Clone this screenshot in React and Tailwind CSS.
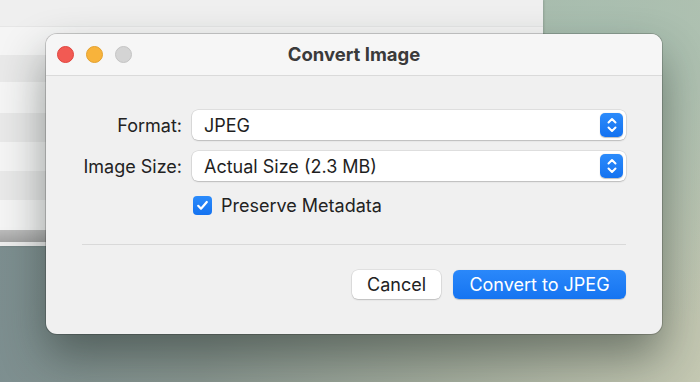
import React from 'react'

const rows = [28, 27, 31, 29, 29, 29, 27]

function Stepper() {
  return (
    <div className="w-[23px] h-[24px] rounded-[5px] bg-gradient-to-b from-[#2b8bfb] to-[#1472f0] flex items-center justify-center shadow-[0_0.5px_1px_rgba(0,0,0,0.25)]">
      <svg width="14" height="18" viewBox="0 0 14 18" fill="none" stroke="white" strokeWidth="2" strokeLinecap="round" strokeLinejoin="round">
        <path d="M3.5 6.5L7 3l3.5 3.5" />
        <path d="M3.5 11.5L7 15l3.5-3.5" />
      </svg>
    </div>
  )
}

function PopUp({ value }) {
  return (
    <div className="flex-1 h-[30px] rounded-[6px] bg-white flex items-center justify-between pl-[12px] pr-[3px] shadow-[0_0_0_0.5px_rgba(0,0,0,0.14),0_1px_1.5px_rgba(0,0,0,0.16)]">
      <span className="text-[18px] text-[#1f1f1f]">{value}</span>
      <Stepper />
    </div>
  )
}

export default function App() {
  return (
    <div
      className="relative w-[700px] h-[382px] overflow-hidden bg-[linear-gradient(100deg,#7a8d90_0%,#88958f_35%,#a2ab9c_65%,#c4c8b2_100%)]"
      style={{ fontFamily: 'Inter, "Noto Sans", sans-serif' }}
    >
      {/* green tint top right of desktop */}
      <div className="absolute inset-0 bg-[radial-gradient(ellipse_at_85%_10%,rgba(168,192,178,0.9)_0%,rgba(168,192,178,0)_60%)]" />

      {/* window behind the sheet */}
      <div className="absolute left-0 top-0 w-[543px] h-[246px] bg-[#f2f2f2] flex flex-col shadow-[1px_0_2px_rgba(0,0,0,0.15)]">
        <div className="h-[27px] bg-[#efefef] border-b border-[#e6e6e6]" />
        {rows.map((h, i) => (
          <div
            key={i}
            className={i % 2 === 0 ? 'bg-[#f5f5f5]' : 'bg-[#e9e9e9]'}
            style={{ height: h }}
          />
        ))}
        <div className="h-[3px] bg-[#f4f4f4]" />
        <div className="h-[12px] bg-gradient-to-b from-[#bcbcbc] to-[#a4a4a4]" />
        <div className="flex-1 bg-[#ededed]" />
      </div>

      {/* dialog */}
      <div className="absolute left-[46px] top-[34px] w-[616px] h-[300px] rounded-[11px] bg-[#f0f0f0] overflow-hidden flex flex-col shadow-[0_0_0_1px_rgba(0,0,0,0.18),0_22px_45px_rgba(25,35,30,0.45)]">
        <div className="relative h-[42px] bg-[#f6f6f6] border-b border-[#dadada] flex items-center justify-center">
          <div className="absolute left-[11px] top-[12px] flex gap-[12px]">
            <div className="w-[17px] h-[17px] rounded-full bg-[#f25a53] border border-[#e0443e]" />
            <div className="w-[17px] h-[17px] rounded-full bg-[#f8b33b] border border-[#e3a12e]" />
            <div className="w-[17px] h-[17px] rounded-full bg-[#d4d4d4] border border-[#c4c4c4]" />
          </div>
          <span className="text-[18.5px] font-bold text-[#3a3a3a]">Convert Image</span>
        </div>

        <div className="flex flex-col px-[36px] pt-[34px]">
          <div className="flex items-center gap-[10px]">
            <span className="w-[100px] text-right text-[18px] text-[#222]">Format:</span>
            <PopUp value="JPEG" />
          </div>
          <div className="flex items-center gap-[10px] mt-[11px]">
            <span className="w-[100px] text-right text-[18px] text-[#222] whitespace-nowrap">Image Size:</span>
            <PopUp value="Actual Size (2.3 MB)" />
          </div>
          <div className="flex items-center gap-[9px] mt-[11px] ml-[111px]">
            <div className="w-[19px] h-[19px] rounded-[4px] bg-gradient-to-b from-[#2b8bfb] to-[#1472f0] flex items-center justify-center">
              <svg width="15" height="15" viewBox="0 0 15 15" fill="none" stroke="white" strokeWidth="2.2" strokeLinecap="round" strokeLinejoin="round">
                <path d="M3.2 7.8l2.8 2.9L11.8 4" />
              </svg>
            </div>
            <span className="text-[18px] text-[#222]">Preserve Metadata</span>
          </div>
          <div className="h-px bg-[#d9d9d9] mt-[25px]" />
          <div className="flex justify-end gap-[12px] mt-[25px]">
            <button className="w-[89px] h-[29px] rounded-[6px] bg-white text-[18px] text-[#222] shadow-[0_0_0_0.5px_rgba(0,0,0,0.12),0_1px_1.5px_rgba(0,0,0,0.16)]">
              Cancel
            </button>
            <button className="w-[173px] h-[29px] rounded-[6px] bg-gradient-to-b from-[#2a88fa] to-[#1574f1] text-[18px] text-white shadow-[0_0.5px_1px_rgba(0,0,0,0.2)]">
              Convert to JPEG
            </button>
          </div>
        </div>
      </div>
    </div>
  )
}
